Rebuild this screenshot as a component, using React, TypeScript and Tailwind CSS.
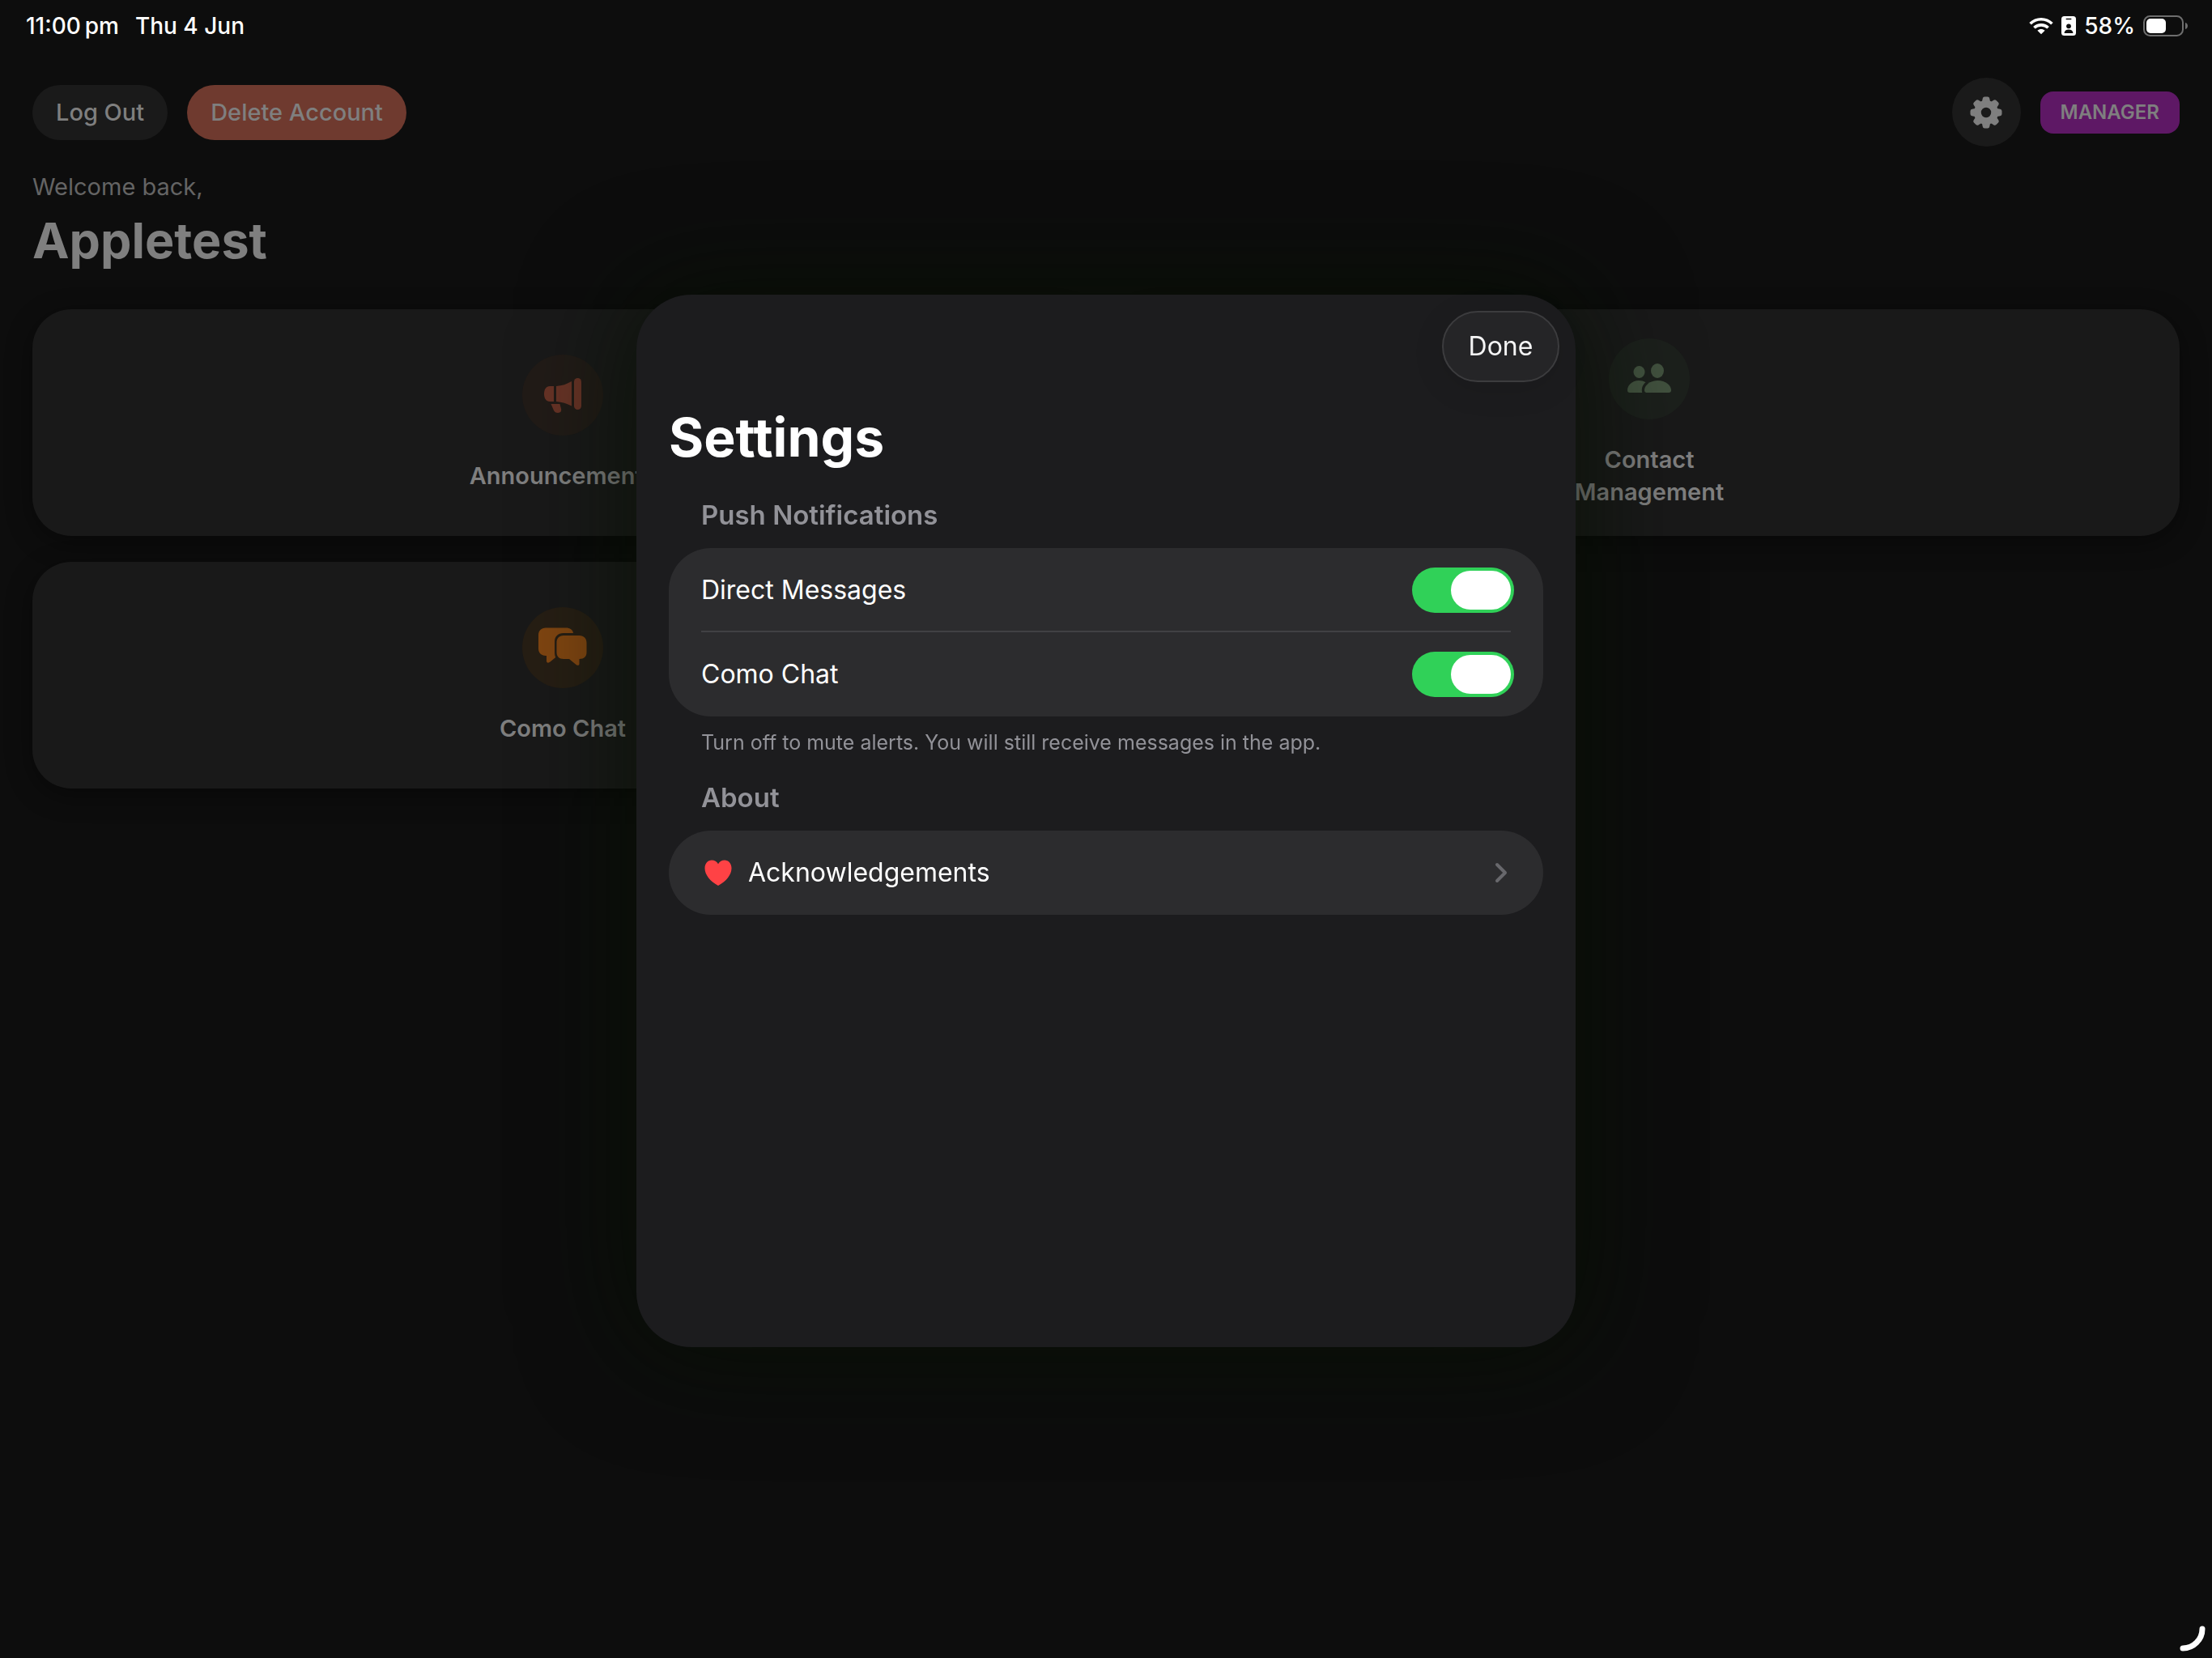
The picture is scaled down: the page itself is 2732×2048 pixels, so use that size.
import { useState } from "react";
import type { ReactNode } from "react";

type Tile = {
  title: string;
  circleClass: string;
  icon: ReactNode;
};

type SettingToggleProps = {
  id: string;
  label: string;
  checked: boolean;
  onChange: (checked: boolean) => void;
};

function MegaphoneIcon() {
  return (
    <svg viewBox="0 0 100 100" className="h-full w-full" fill="#673326" aria-hidden="true">
      <path d="M39 39V58H34C29.500 58 27 54 27 48.500S29.500 39 34 39Z" />
      <path d="M42 39C49 38.500 55 36.500 61 33V63.500C55 60.500 49 58.500 42 58Z" />
      <rect x="64" y="29" width="9" height="39" rx="4.500" />
      <path d="M35.500 61H46.500L48 67C48.800 70 47 72 44 72C41.500 72 40 71 39 69Z" />
    </svg>
  );
}

function ContactsIcon() {
  return (
    <svg viewBox="0 0 100 100" className="h-full w-full" fill="#42523f" aria-hidden="true">
      <ellipse cx="37.500" cy="41.500" rx="7" ry="7.500" />
      <ellipse cx="60" cy="40" rx="8" ry="9" />
      <path d="M26 67C24 67 23 66 23 64C23 58 29 52 37 52C40 52 43 52.800 45.500 54.200C41.500 57.500 40 62 41.300 67Z" />
      <path d="M47 67C45 67 44 66 44 64C44 58 51 52 60.500 52S77 58 77 64C77 66 76 67 74 67Z" />
    </svg>
  );
}

function ChatIcon() {
  return (
    <svg viewBox="0 0 100 100" className="h-full w-full" fill="#7f4511" aria-hidden="true">
      <path d="M29 25.500H54C59 25.500 62.500 28 63 32H51C44 32 40 36 40 43V55C40 58 40.300 60 41.200 62L34.500 67.500C32.500 69.300 30 69 30 66.500V60H29C23.500 60 20 56.500 20 51V34.500C20 29 23.500 25.500 29 25.500Z" />
      <path d="M51 35H70.500C76 35 79.500 38.500 79.500 44V55.500C79.500 61 76.500 64 70.500 64V70C70.500 72 68.500 72.500 66.500 71L58 64H51C45.500 64 42.500 61 42.500 55.500V44C42.500 38.500 45.500 35 51 35Z" />
    </svg>
  );
}

function GearIcon() {
  return (
    <svg viewBox="-20 -20 40 40" className="size-10" aria-hidden="true">
      <g fill="#7f7f7f">
        {[0, 45, 90, 135, 180, 225, 270, 315].map((angle) => (
          <path
            key={angle}
            transform={`rotate(${angle})`}
            d="M-5.500 -11L-4.300 -17.300Q-3.900 -19.500 -1.800 -19.500H1.800Q3.900 -19.500 4.300 -17.300L5.500 -11Z"
          />
        ))}
      </g>
      <circle r="10.600" fill="none" stroke="#7f7f7f" strokeWidth="8.800" />
    </svg>
  );
}

function WifiIcon() {
  return (
    <svg viewBox="0 0 30 22" className="h-[22px] w-[30px]" aria-hidden="true">
      <g fill="none" stroke="#fff" strokeWidth="3.600">
        <path d="M1.600 8.300C9 0.800 21 0.800 28.400 8.300" />
        <path d="M6.400 13.300C11 8.700 19 8.700 23.600 13.300" />
      </g>
      <path d="M10.400 16.700C13 14.300 17 14.300 19.600 16.700L15 21.300Z" fill="#fff" />
    </svg>
  );
}

function BadgeIcon() {
  return (
    <svg viewBox="0 0 18 24" className="h-6 w-[18px]" aria-hidden="true">
      <rect width="18" height="24" rx="3.500" fill="#fff" />
      <rect x="5.500" y="2.800" width="7" height="1.400" rx="0.700" fill="#0d0d0d" />
      <circle cx="9" cy="12.300" r="2.900" fill="#0d0d0d" />
      <path d="M3.500 21C3.800 17.800 6 16.500 9 16.500S14.200 17.800 14.500 21Z" fill="#0d0d0d" />
    </svg>
  );
}

function BatteryIcon() {
  return (
    <svg viewBox="0 0 56 26" className="h-[26px] w-14" aria-hidden="true">
      <rect x="1" y="1" width="48" height="24" rx="7.500" fill="none" stroke="#6e6e6e" strokeWidth="2" />
      <rect x="4" y="4" width="24" height="18" rx="5" fill="#fff" />
      <path d="M52 9C56 10 56 16 52 17Z" fill="#6e6e6e" />
    </svg>
  );
}

function StatusBar() {
  return (
    <div className="flex h-16 items-center justify-between pr-[29px] pl-8 text-[28px] leading-8 font-medium text-white">
      <div className="flex gap-5">
        <span>11:00{"\u2009"}pm</span>
        <span>Thu 4 Jun</span>
      </div>
      <div className="flex items-center gap-[10px]">
        <WifiIcon />
        <BadgeIcon />
        <span>58%</span>
        <BatteryIcon />
      </div>
    </div>
  );
}

const tiles: Tile[] = [
  { title: "Announcements", circleClass: "bg-[#211b17]", icon: <MegaphoneIcon /> },
  { title: "Contact\nManagement", circleClass: "bg-[#1c201c]", icon: <ContactsIcon /> },
  { title: "Como Chat", circleClass: "bg-[#261e14]", icon: <ChatIcon /> },
];

function TileCard({ title, circleClass, icon }: Tile) {
  return (
    <button
      type="button"
      className="flex min-h-[280px] flex-col items-center justify-center gap-[30px] rounded-[48px] bg-[#191919] pt-[2px] shadow-[0_8px_32px_rgba(0,0,0,0.4)]"
    >
      <span className={`size-[100px] rounded-full ${circleClass}`}>{icon}</span>
      <span className="text-[29px] leading-10 font-semibold whitespace-pre-line text-[#7f7f7f]">{title}</span>
    </button>
  );
}

function SettingToggle({ id, label, checked, onChange }: SettingToggleProps) {
  return (
    <div className="flex h-[104px] items-center justify-between pr-9 pl-10">
      <label htmlFor={id} className="text-[32px] leading-10 text-white">
        {label}
      </label>
      <input
        id={id}
        type="checkbox"
        role="switch"
        checked={checked}
        onChange={(event) => onChange(event.target.checked)}
        className="h-14 w-[126px] appearance-none rounded-full bg-[#48484a] p-1 before:block before:h-12 before:w-[74px] before:rounded-full before:bg-white checked:bg-[#30d158] checked:before:ml-auto"
      />
    </div>
  );
}

function SettingsSheet() {
  const [directMessages, setDirectMessages] = useState(true);
  const [comoChat, setComoChat] = useState(true);

  return (
    <div
      role="dialog"
      aria-modal="true"
      aria-labelledby="settings-title"
      className="min-h-[1300px] w-full max-w-[1160px] rounded-[68px] bg-[#1c1c1e] shadow-[0_0_130px_10px_rgba(5,16,0,0.7)]"
    >
      <div className="flex justify-end p-5 pb-0">
        <button
          type="button"
          className="h-[88px] w-[145px] rounded-full border-2 border-[#3c3c3e] bg-[#252527] text-[32px] leading-10 text-[#f5f5f5] shadow-[0_8px_40px_rgba(0,0,0,0.1)]"
        >
          Done
        </button>
      </div>
      <div className="px-10 pt-7">
        <h2 id="settings-title" className="text-[66px] leading-[80px] font-bold text-white">
          Settings
        </h2>

        <section className="mt-9">
          <h3 className="px-10 text-[33px] leading-10 font-semibold text-[#929298]">Push Notifications</h3>
          <div className="relative mt-[21px] rounded-[52px] bg-[#2c2c2e]">
            <SettingToggle
              id="direct-messages"
              label="Direct Messages"
              checked={directMessages}
              onChange={setDirectMessages}
            />
            <hr className="absolute inset-x-10 top-[102px] border-t-2 border-[#414144]" />
            <SettingToggle id="como-chat" label="Como Chat" checked={comoChat} onChange={setComoChat} />
          </div>
          <p className="mt-4 px-10 text-[25px] leading-8 text-[#929298]">
            Turn off to mute alerts. You will still receive messages in the app.
          </p>
        </section>

        <section className="mt-8">
          <h3 className="px-10 text-[33px] leading-10 font-semibold text-[#929298]">About</h3>
          <a href="#acknowledgements" className="mt-[21px] flex h-[104px] items-center rounded-[52px] bg-[#2c2c2e] px-11">
            <svg viewBox="0 0 34 32" className="h-8 w-[34px]" fill="#ff4245" aria-hidden="true">
              <path d="M17 32C7 26.500 0.500 18.500 0.500 10.500C0.500 4.500 4.300 0.500 9 0.500C12.500 0.500 15.500 2.300 17 5.200C18.500 2.300 21.500 0.500 25 0.500C29.700 0.500 33.500 4.500 33.500 10.500C33.500 18.500 27 26.500 17 32Z" />
            </svg>
            <span className="ml-5 text-[32px] leading-10 text-white">Acknowledgements</span>
            <svg viewBox="0 0 16 26" className="ml-auto h-[26px] w-4" aria-hidden="true">
              <path d="M3 3L13 13L3 23" fill="none" stroke="#68686c" strokeWidth="4" strokeLinecap="round" strokeLinejoin="round" />
            </svg>
          </a>
        </section>
      </div>
    </div>
  );
}

export default function App() {
  return (
    <div className="min-h-screen bg-[#0d0d0d] font-['Inter','Liberation_Sans',sans-serif]">
      <StatusBar />

      <main className="px-10 pt-8">
        <header className="flex items-center justify-between text-[29px] leading-9 font-medium text-[#7f7f7f]">
          <div className="flex gap-6">
            <button type="button" className="h-[68px] rounded-full bg-[#1a1a1a] px-[29px]">
              Log Out
            </button>
            <button type="button" className="h-[68px] rounded-full bg-[#6f3a2f] px-[29px]">
              Delete Account
            </button>
          </div>
          <div className="flex items-center gap-6">
            <button
              type="button"
              aria-label="Settings"
              className="flex size-[85px] items-center justify-center rounded-full bg-[#1a1a1a]"
            >
              <GearIcon />
            </button>
            <span className="rounded-2xl bg-[#5e1865] px-[25px] py-[10px] text-[24px] leading-8 font-semibold">
              MANAGER
            </span>
          </div>
        </header>

        <p className="mt-8 text-[29px] leading-9 text-[#646464]">Welcome back,</p>
        <h1 className="mt-2 text-[61px] leading-[80px] font-bold text-[#7f7f7f]">Appletest</h1>

        <div className="mt-[45px] grid grid-cols-2 gap-8">
          {tiles.map((tile) => (
            <TileCard key={tile.title} {...tile} />
          ))}
        </div>
      </main>

      <div className="fixed inset-0 flex items-center justify-center pb-5">
        <SettingsSheet />
      </div>

      <svg viewBox="0 0 40 40" className="fixed right-0 bottom-0 size-10" aria-hidden="true">
        <path d="M28 4C28 17.500 17 28 4 28" fill="none" stroke="#fff" strokeWidth="7" strokeLinecap="round" />
      </svg>
    </div>
  );
}
